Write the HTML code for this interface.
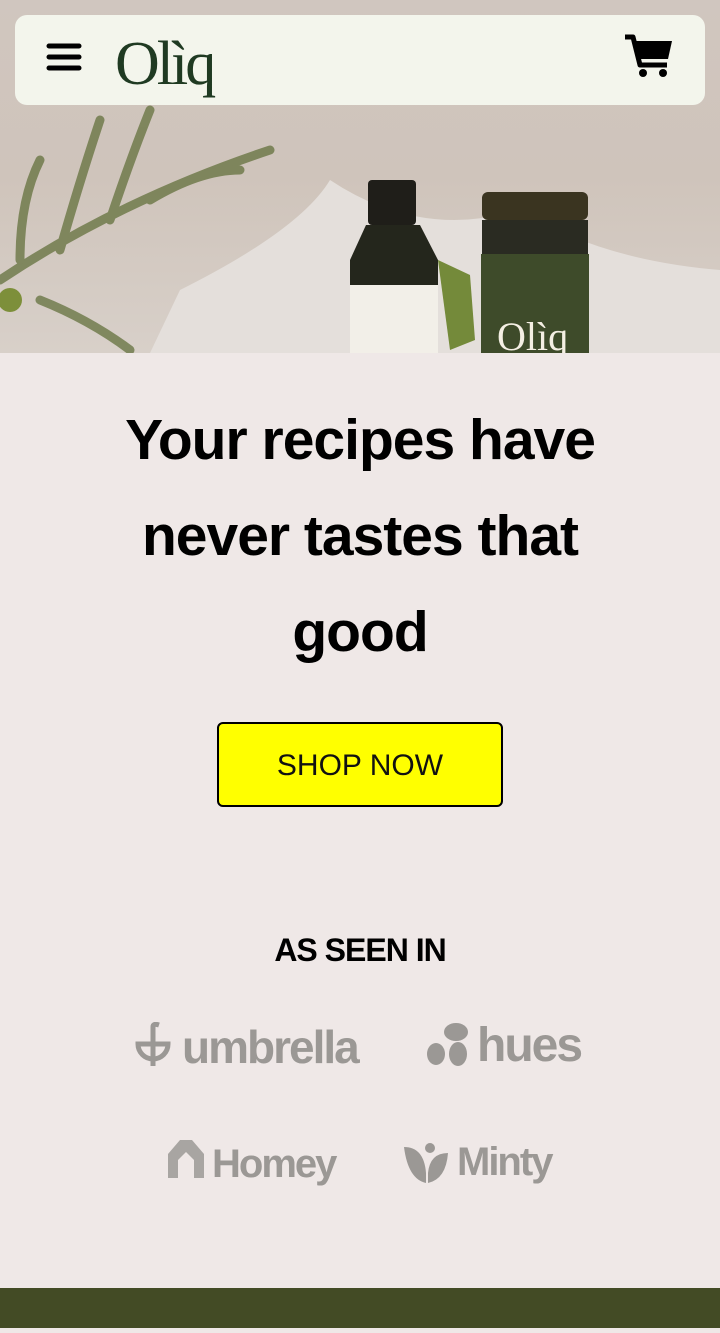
<!DOCTYPE html>
<html><head><meta charset="utf-8"><style>
*{margin:0;padding:0;box-sizing:border-box}
body{width:720px;height:1333px;background:#efe8e7;font-family:"Liberation Sans",sans-serif;position:relative;overflow:hidden}
.hero{position:absolute;left:0;top:0;width:720px;height:353px;background:linear-gradient(180deg,#d0c6bf 0%,#cfc4bb 50%,#d8d0c9 100%)}
.hdr{position:absolute;left:15px;top:15px;width:690px;height:90px;background:#f3f5ec;border-radius:12px}
.logo{position:absolute;left:100px;top:14px;font-family:"Liberation Serif",serif;font-size:62px;color:#1f3a22;line-height:70px;letter-spacing:-3px}
h1{position:absolute;left:0;top:392px;width:720px;text-align:center;font-size:57px;font-weight:bold;line-height:96px;letter-spacing:-1px;color:#000}
.btn{position:absolute;left:217px;top:722px;width:286px;height:85px;background:#ffff00;border:2px solid #000;border-radius:6px;text-align:center;line-height:83px;font-size:30px;color:#111}
.asi{position:absolute;left:0;top:932px;width:720px;text-align:center;font-weight:bold;font-size:32px;letter-spacing:-1px}
.lg{position:absolute;color:#9b9895;font-weight:bold;letter-spacing:-2px}
.foot{position:absolute;left:0;top:1288px;width:720px;height:40px;background:#434b25}
</style></head><body>
<div class="hero">
<svg width="720" height="353" style="position:absolute;left:0;top:0">
<path d="M180 290 Q300 230 330 180 Q420 240 520 210 Q600 260 720 270 L720 353 L150 353 Z" fill="#e4dfdb"/>
<g stroke="#5c6b34" stroke-width="9" fill="none" opacity="0.7" stroke-linecap="round">
<path d="M0 280 Q120 200 270 150"/><path d="M60 250 Q80 180 100 120"/><path d="M110 220 Q130 160 150 110"/><path d="M150 200 Q200 170 240 170"/><path d="M20 260 Q20 200 40 160"/><path d="M40 300 Q90 320 130 350"/>
</g>
<circle cx="10" cy="300" r="12" fill="#7d8f3a"/>
<rect x="368" y="180" width="48" height="45" rx="4" fill="#1f1e19"/>
<path d="M366 225 L420 225 L438 260 L438 353 L350 353 L350 260 Z" fill="#24261c"/>
<rect x="350" y="285" width="88" height="68" fill="#f2efe8"/>
<path d="M438 260 L470 275 L475 340 L450 350 Z" fill="#748a3a"/>
<rect x="482" y="192" width="106" height="28" rx="6" fill="#3a3420"/>
<rect x="482" y="220" width="106" height="34" fill="#2a2b22"/>
<rect x="481" y="254" width="108" height="99" fill="#3e4b2a"/>
<text x="497" y="350" font-family="Liberation Serif" font-size="40" fill="#f4efe3">Olìq</text>
</svg>
</div>
<div class="hdr">
<svg width="40" height="40" style="position:absolute;left:30px;top:25px"><g stroke="#000" stroke-width="5" stroke-linecap="round"><path d="M4 6H34M4 17H34M4 28H34"/></g></svg>
<div class="logo">Olìq</div>
<svg width="52" height="48" style="position:absolute;left:608px;top:18px" viewBox="0 0 52 48"><path d="M2 4H10L17 32H44" stroke="#000" stroke-width="5" fill="none" stroke-linejoin="round"/><path d="M11 8H49L45 26H15Z" fill="#000"/><circle cx="20" cy="40" r="4" fill="#000"/><circle cx="40" cy="40" r="4" fill="#000"/></svg>
</div>
<h1>Your recipes have<br>never tastes that<br>good</h1>
<div class="btn">SHOP NOW</div>
<div class="asi">AS SEEN IN</div>
<svg width="40" height="46" style="position:absolute;left:135px;top:1022px"><g stroke="#9b9895" stroke-width="5" fill="none"><path d="M3 22 A15 15 0 0 0 33 22 Z"/><path d="M18 44 V5 Q18 1 24 3"/></g></svg>
<div class="lg" style="left:182px;top:1020px;font-size:46px">umbrella</div>
<svg width="52" height="46" style="position:absolute;left:426px;top:1022px"><ellipse cx="30" cy="10" rx="12" ry="9" fill="#9b9895"/><ellipse cx="10" cy="32" rx="9" ry="11" fill="#9b9895"/><ellipse cx="32" cy="32" rx="9" ry="12" fill="#9b9895"/></svg>
<div class="lg" style="left:477px;top:1018px;font-size:48px">hues</div>
<svg width="40" height="40" style="position:absolute;left:168px;top:1140px"><path d="M0 14 L12 0 L24 0 L36 14 V38 H26 V20 L18 12 L10 20 V38 H0Z" fill="#a8a5a2"/></svg>
<div class="lg" style="left:212px;top:1142px;font-size:40px">Homey</div>
<svg width="46" height="44" style="position:absolute;left:404px;top:1143px"><path d="M0 4 Q20 4 22 30 L22 40 Q4 36 0 4Z M44 10 Q26 10 24 30 L24 40 Q42 36 44 10Z" fill="#9b9895"/><circle cx="26" cy="5" r="5" fill="#9b9895"/></svg>
<div class="lg" style="left:457px;top:1140px;font-size:40px">Minty</div>
<div class="foot"></div>
</body></html>
